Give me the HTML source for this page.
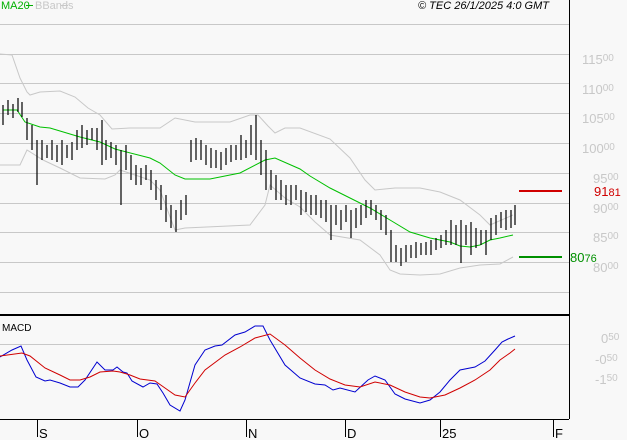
<!DOCTYPE html><html><head><style>
body{margin:0;background:#f8f8f8;font-family:"Liberation Sans",sans-serif}
svg{display:block}
text{font-family:"Liberation Sans",sans-serif}
</style></head><body>
<svg width="627" height="440" viewBox="0 0 627 440">
<rect width="627" height="440" fill="#f8f8f8"/>
<g stroke="#c8c8c8" stroke-width="1">
<path d="M0 24.5H569M0 54.5H569M0 83.5H569M0 113.5H569M0 143.5H569M0 173.5H569M0 203.5H569M0 232.5H569M0 262.5H569M0 292.5H569M0 344.5H569"/>
</g>
<g font-size="13" fill="#c8c8c8">
<text x="582" y="64">115<tspan font-size="10" dy="-3">00</tspan></text>
<text x="582" y="94">110<tspan font-size="10" dy="-3">00</tspan></text>
<text x="582" y="123">105<tspan font-size="10" dy="-3">00</tspan></text>
<text x="582" y="153">100<tspan font-size="10" dy="-3">00</tspan></text>
<text x="593" y="183">95<tspan font-size="10" dy="-3">00</tspan></text>
<text x="593" y="213">90<tspan font-size="10" dy="-3">00</tspan></text>
<text x="593" y="242">85<tspan font-size="10" dy="-3">00</tspan></text>
<text x="593" y="272">80<tspan font-size="10" dy="-3">00</tspan></text>
<text x="601" y="343">0<tspan font-size="10" dy="-3">50</tspan></text>
<text x="595" y="364">-0<tspan font-size="10" dy="-3">50</tspan></text>
<text x="595" y="384">-1<tspan font-size="10" dy="-3">50</tspan></text>
</g>
<text x="1" y="9" font-size="11" fill="#00b000">MA20</text><path d="M26 5.5H33" stroke="#00b000"/>
<text x="35" y="9" font-size="11" fill="#c8c8c8">BBands</text><path d="M61 5.5H68" stroke="#c8c8c8"/>
<text x="418" y="9" font-size="11" font-style="italic" fill="#000">© TEC 26/1/2025 4:0 GMT</text>
<g fill="none" stroke-width="1">
<polyline stroke="#c8c8c8" points="0,54 12,55 20,78 27,92 30,95 40,92 60,91 75,97 88,108 100,115 112,129 130,128 160,128 175,118 195,122 230,122 250,115 258,115 268,126 275,133 285,128 300,128 330,139 350,158 365,180 375,190 395,188 420,188 440,192 460,200 480,215 490,225 513,215"/>
<polyline stroke="#c8c8c8" points="0,165 20,165 27,150 43,160 60,168 80,178 105,179 115,175 120,170 150,180 160,190 175,230 185,228 250,225 265,205 270,185 285,198 300,207 315,222 330,235 360,240 380,255 390,270 400,274 420,275 440,274 460,268 480,265 500,264 513,257"/>
<polyline stroke="#00c000" points="3,110 17,110 25,122 40,127 50,128 60,131 80,137 100,142 115,149 150,158 160,163 175,175 185,179 210,179 240,173 265,160 275,158 300,169 310,176 330,188 350,198 370,208 390,220 410,232 430,238 450,242 460,246 470,247 480,245 490,240 500,238 513,235"/>
<polyline stroke="#0000d0" points="0,357 12,350 21,346 27,360 36,377 45,381 50,380 60,383 70,387 78,387 85,380 97,362 105,370 113,370 117,367 123,372 127,373 132,381 143,387 150,383 157,384 163,393 170,405 180,411 185,400 195,365 205,350 215,346 222,345 235,335 245,332 255,326 263,326 270,340 285,365 300,378 315,384 325,385 333,390 340,388 355,392 368,380 375,376 385,380 395,394 405,399 420,403 430,400 440,392 450,380 460,370 475,367 485,361 495,350 502,342 508,339 515,336"/>
<polyline stroke="#d00000" points="0,356 22,353 30,356 45,368 60,375 70,380 80,380 90,377 100,372 113,371 120,372 130,375 140,379 155,381 165,388 175,395 185,397 195,383 205,370 225,355 240,347 255,338 270,334 285,345 300,358 315,370 330,379 345,385 360,387 375,382 390,385 405,392 420,397 430,398 445,395 460,388 475,380 490,370 500,360 510,353 515,349"/>
</g>
<path stroke="#000" stroke-width="1.2" fill="none" d="
M3 105V125 M8 100V115 M13 104V118 M18 98V112 M22 102V117 M27 118V140 M32 125V150 M37 140V185 M42 140V160 M47 145V158 M52 140V160 M57 145V162 M62 140V165 M67 145V158 M72 142V160 M77 130V150 M82 125V148 M87 130V145 M92 128V140 M97 128V150 M102 120V165 M106 140V160 M111 142V158 M116 145V165 M121 150V205 M126 145V170 M131 155V180 M136 165V185 M141 168V185 M146 165V180 M151 170V190 M156 180V200 M161 185V210 M166 195V222 M171 205V228 M176 210V232 M181 200V220 M186 195V215 M191 140V162 M196 138V160 M201 140V160 M206 145V165 M211 148V168 M216 150V168 M221 152V170 M226 148V165 M231 145V162 M236 145V160 M241 135V160 M246 140V158 M251 125V155 M256 115V160 M261 140V175 M266 150V190 M271 170V190 M276 175V200 M281 180V200 M286 185V205 M291 185V205 M296 185V200 M301 190V215 M306 192V212 M311 195V215 M316 195V215 M321 200V218 M326 200V222 M331 205V240 M336 205V225 M341 210V230 M346 205V222 M351 210V238 M356 208V228 M361 205V225 M366 200V218 M371 200V215 M376 205V220 M381 210V230 M386 215V235 M391 230V262 M396 245V262 M401 248V266 M406 245V262 M411 245V258 M416 242V258 M421 243V255 M426 242V255 M431 240V255 M436 238V250 M441 235V248 M446 230V245 M451 220V245 M456 225V245 M461 220V263 M466 225V245 M471 222V255 M476 228V248 M481 230V245 M486 230V255 M491 218V240 M496 215V235 M501 212V228 M506 210V230 M511 210V228 M515 205V225"/>
<path stroke="#000" stroke-width="1" d="M569.5 0V419M0 419.5H569M37.5 419V437M137.5 419V437M246.5 419V437M345.5 419V437M440.5 419V437M553.5 419V437" fill="none"/>
<rect x="0" y="314" width="569" height="2" fill="#000"/>
<g font-size="13" fill="#000"><text x="39" y="438">S</text><text x="139" y="438">O</text><text x="248" y="438">N</text><text x="347" y="438">D</text><text x="442" y="438">25</text><text x="555" y="438">F</text></g>
<text x="2" y="331" font-size="10" fill="#000">MACD</text>
<rect x="519" y="190" width="43" height="2" fill="#d00000"/>
<text x="594" y="196" font-size="13" fill="#d00000">91<tspan font-size="11">81</tspan></text>
<rect x="519" y="256" width="43" height="2" fill="#009000"/>
<text x="570" y="262" font-size="13" fill="#009000">80<tspan font-size="11">76</tspan></text>
</svg></body></html>
